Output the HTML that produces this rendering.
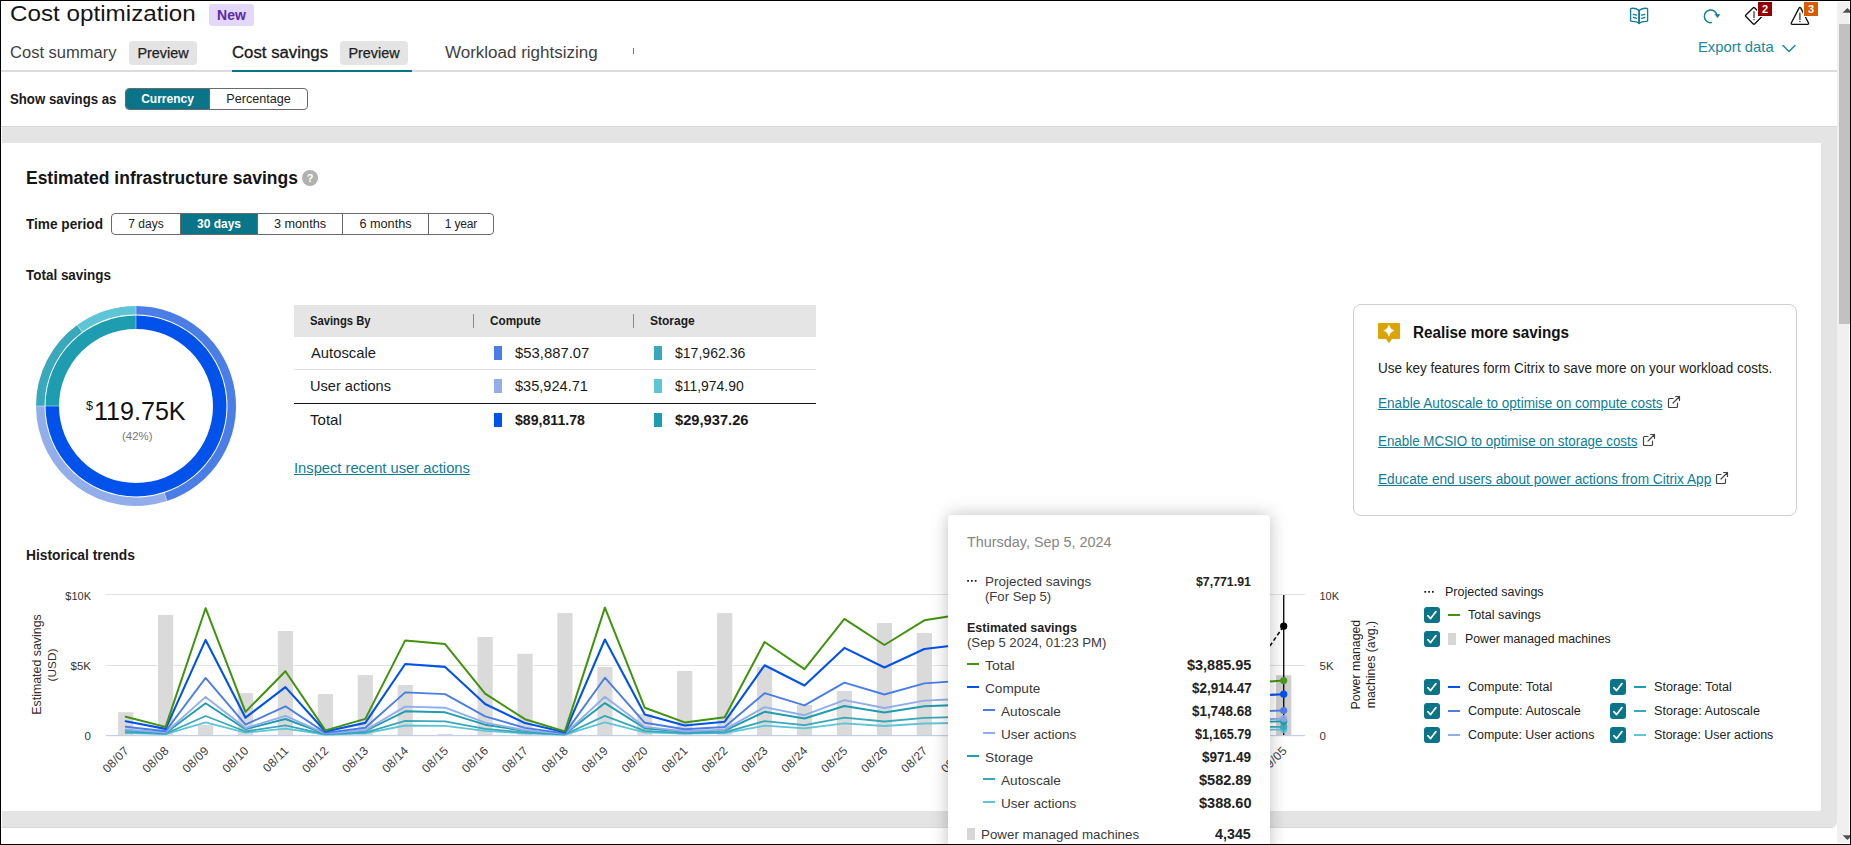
<!DOCTYPE html>
<html><head><meta charset="utf-8"><title>Cost optimization</title>
<style>
*{box-sizing:border-box;margin:0;padding:0}
html,body{width:1851px;height:845px;overflow:hidden;background:#fff}
body{font-family:"Liberation Sans",sans-serif;color:#1a1a1a;position:relative}
.abs{position:absolute;white-space:nowrap}
.t{position:absolute;white-space:nowrap;line-height:1;transform-origin:0 50%}
.b{font-weight:bold}
a{color:#0f7d95;text-decoration:underline}
.seg{position:absolute;display:flex;border:1px solid #6a6a6a;border-radius:4px;overflow:hidden;background:#fff}
.seg div{height:100%;display:flex;align-items:center;justify-content:center;font-size:12px;color:#222;border-right:1px solid #6a6a6a;white-space:nowrap}
.seg div:last-child{border-right:none}
.seg div.on{background:#0a7589;color:#fff;font-weight:bold}
.badge{position:absolute;background:#e4e4e4;border-radius:4px;font-size:14.4px;color:#222;-webkit-text-stroke:0.25px #222;display:flex;align-items:center;justify-content:center}
.cb{position:absolute;width:16px;height:16px;border-radius:3px;background:#0a7589}
.cb svg{position:absolute;left:0;top:0}
.mk{position:absolute;height:2px;width:12px}
</style></head><body>

<!-- frame -->
<div class="abs" style="left:0;top:0;width:1851px;height:845px;border:1px solid #000;z-index:50;pointer-events:none"></div>
<!-- grey page background below toolbar -->
<div class="abs" style="left:2px;top:126px;width:1835px;height:702px;background:#e4e4e4;border-radius:0 0 6px 0"></div>
<div class="abs" style="left:1px;top:827px;width:1832px;height:1px;background:#d9d9d9"></div>
<div class="abs" style="left:1px;top:126px;width:1836px;height:1px;background:#d9d9d9"></div>
<!-- main card -->
<div class="abs" style="left:1px;top:143px;width:1820px;height:668px;background:#fff"></div>
<!-- scrollbar -->
<div class="abs" style="left:1837px;top:2px;width:12px;height:841px;background:#f0f0f0"></div>
<div class="abs" style="left:1839px;top:24px;width:11px;height:300px;background:#c1c1c1"></div>
<svg class="abs" style="left:1837px;top:2px" width="13" height="20" viewBox="1837 2 13 20"><path d="M1842.6 12.7 L1852.2 12.7 L1847.4 7.9 Z" fill="#505050"/></svg>
<svg class="abs" style="left:1837px;top:826px" width="13" height="18" viewBox="1837 826 13 18"><path d="M1842.6 835.2 L1852.2 835.2 L1847.4 840 Z" fill="#505050"/></svg>

<!-- title -->
<div class="t" id="title" style="left:9.69px;top:2.80px;font-size:22px;color:#151515;transform:scaleX(1.1010);">Cost optimization</div>
<div class="abs b" id="new" style="left:209px;top:4px;width:45px;height:22px;background:#e3d7fb;border-radius:3px;color:#5a2aa5;font-size:14px;display:flex;align-items:center;justify-content:center">New</div>

<!-- tabs -->
<div class="t" id="tab1" style="left:9.97px;top:45.00px;font-size:16px;color:#3f3f3f;transform:scaleX(1.0330);">Cost summary</div>
<div class="badge" id="pv1" style="left:129px;top:41px;width:68px;height:24px">Preview</div>
<div class="t" id="tab2" style="left:232.16px;top:45.00px;font-size:16px;color:#1a1a1a;transform:scaleX(1.0483);-webkit-text-stroke:0.3px #1a1a1a;">Cost savings</div>
<div class="badge" id="pv2" style="left:340px;top:41px;width:68px;height:24px">Preview</div>
<div class="t" id="tab3" style="left:444.72px;top:45.00px;font-size:16px;color:#3f3f3f;transform:scaleX(1.0621);">Workload rightsizing</div>
<div class="abs" style="left:633px;top:48px;width:1px;height:6px;background:#777"></div>
<div class="abs" style="left:1px;top:70px;width:1836px;height:2px;background:#dcdcdc"></div>
<div class="abs" style="left:232px;top:70px;width:180px;height:2px;background:#0a7589"></div>

<!-- top right icons -->
<svg class="abs" style="left:1620px;top:0px" width="210" height="32" viewBox="1620 0 210 32" fill="none" stroke-linecap="round" stroke-linejoin="round">
<g stroke="#0f7d95" stroke-width="1.35">
<path d="M1639.1 10.5 C1637 8.7 1634 8.1 1631.3 8.3 Q1630.6 8.4 1630.6 9.1 L1630.6 20.6 Q1630.6 21.4 1631.4 21.4 C1634 21.2 1637 21.7 1639.1 23.3 C1641.2 21.7 1644.2 21.2 1646.8 21.4 Q1647.6 21.4 1647.6 20.6 L1647.6 9.1 Q1647.6 8.4 1646.9 8.3 C1644.2 8.1 1641.2 8.7 1639.1 10.5 Z"/>
<path d="M1639.1 10.6 L1639.1 23.2" stroke-width="1.9"/>
<path d="M1633.3 14.3 L1636.6 15.2 M1633.3 17.4 L1636.6 18.4 M1644.9 14.3 L1641.6 15.2 M1644.9 17.4 L1641.6 18.4" stroke-width="1.25"/>
</g>
<path d="M1711.3 22.6 A6.35 6.35 0 1 1 1716.9 15.0" stroke="#0f7d95" stroke-width="1.5"/>
<path d="M1714.9 14.3 L1720.1 14.3 L1717.5 17.8 Z" fill="#0f7d95" stroke="#0f7d95" stroke-width="0.3"/>
<g stroke="#111" stroke-width="1.35">
<path d="M1753.0 8.0 L1745.9 15.0 Q1745.1 15.8 1745.9 16.6 L1753.0 23.8 Q1753.9 24.7 1754.8 23.8 L1762.0 16.6 Q1762.8 15.8 1762.0 15.0 L1754.8 8.0 Q1753.9 7.1 1753.0 8.0 Z"/>
<path d="M1799.0 8.1 L1791.4 22.8 Q1790.7 24.4 1792.4 24.4 L1807.4 24.4 Q1809.1 24.4 1808.4 22.8 L1800.8 8.1 Q1799.9 6.7 1799.0 8.1 Z"/>
</g>
<g stroke="#555" stroke-width="1.5" stroke-linecap="butt">
<path d="M1754 11.2 L1754 17.9 M1754 19.0 L1754 20.3"/>
<path d="M1799.9 12.7 L1799.9 20.2 M1799.9 20.9 L1799.9 22.1"/>
</g>
</svg>
<div class="abs b" style="left:1757px;top:1px;width:16px;height:16px;background:#fff"></div>
<div class="abs b" style="left:1758px;top:2px;width:14px;height:14px;background:#960000;color:#fff;font-size:11px;text-align:center;line-height:14px">2</div>
<div class="abs b" style="left:1803px;top:1px;width:16px;height:16px;background:#fff"></div>
<div class="abs b" style="left:1804px;top:2px;width:14px;height:14px;background:#d95b00;color:#fff;font-size:11px;text-align:center;line-height:14px">3</div>
<div class="t" id="export" style="left:1698.22px;top:39.20px;font-size:15px;color:#1b87a0;transform:scaleX(0.9864);">Export data</div>
<svg class="abs" style="left:1781px;top:43px" width="16" height="10" viewBox="0 0 16 10" fill="none" stroke="#1b87a0" stroke-width="1.5" stroke-linecap="round" stroke-linejoin="round"><path d="M2 2.5 L8 8.5 L14 2.5"/></svg>

<!-- show savings as -->
<div class="t" id="ssa" style="left:10.40px;top:92.00px;font-size:14px;font-weight:bold;color:#1a1a1a;transform:scaleX(0.9431);">Show savings as</div>
<div class="seg" id="seg1" style="left:125px;top:88px;width:183px;height:22px"><div class="on" style="width:84px">Currency</div><div style="flex:1;font-size:12.6px">Percentage</div></div>

<!-- card heading -->
<div class="t" id="eis" style="left:25.76px;top:169.00px;font-size:18px;font-weight:bold;color:#151515;transform:scaleX(0.9706);">Estimated infrastructure savings</div>
<div class="abs b" style="left:302px;top:170px;width:16px;height:16px;border-radius:8px;background:#b1b1b1;color:#fff;font-size:11px;text-align:center;line-height:16px">?</div>
<div class="t" id="tp" style="left:25.86px;top:217.00px;font-size:14px;font-weight:bold;color:#1a1a1a;transform:scaleX(0.9737);">Time period</div>
<div class="seg" id="seg2" style="left:111px;top:213px;width:383px;height:22px"><div style="width:69px">7 days</div><div class="on" style="width:77px">30 days</div><div style="width:85px;font-size:12.7px">3 months</div><div style="width:86px;font-size:12.7px">6 months</div><div style="flex:1;font-size:12px;letter-spacing:-0.15px">1 year</div></div>
<div class="t" id="ts" style="left:25.87px;top:268.00px;font-size:14px;font-weight:bold;color:#1a1a1a;transform:scaleX(0.9611);">Total savings</div>
<svg class="abs" style="left:0;top:290px" width="280" height="230" viewBox="0 290 280 230"><path d="M136.00 306.00 A100 100 0 0 1 166.90 501.11 L164.28 493.02 A91.5 91.5 0 0 0 136.00 314.50 Z" fill="#4a7de6"/><path d="M166.90 501.11 A100 100 0 0 1 36.00 406.00 L44.50 406.00 A91.5 91.5 0 0 0 164.28 493.02 Z" fill="#92aeea"/><path d="M36.00 406.00 A100 100 0 0 1 77.22 325.10 L82.22 331.97 A91.5 91.5 0 0 0 44.50 406.00 Z" fill="#38a8ba"/><path d="M77.22 325.10 A100 100 0 0 1 136.00 306.00 L136.00 314.50 A91.5 91.5 0 0 0 82.22 331.97 Z" fill="#5ec5d6"/><path d="M136.00 315.50 A90.5 90.5 0 1 1 45.50 406.00 L59.00 406.00 A77 77 0 1 0 136.00 329.00 Z" fill="#0052eb"/><path d="M45.50 406.00 A90.5 90.5 0 0 1 136.00 315.50 L136.00 329.00 A77 77 0 0 0 59.00 406.00 Z" fill="#1e9db1"/><line x1="136.00" y1="330.00" x2="136.00" y2="305.00" stroke="#fff" stroke-opacity="0.55" stroke-width="0.8"/><line x1="164.12" y1="492.55" x2="167.21" y2="502.06" stroke="#fff" stroke-opacity="0.55" stroke-width="0.8"/><line x1="60.00" y1="406.00" x2="35.00" y2="406.00" stroke="#fff" stroke-opacity="0.55" stroke-width="0.8"/><line x1="82.51" y1="332.38" x2="76.63" y2="324.29" stroke="#fff" stroke-opacity="0.55" stroke-width="0.8"/></svg>
<div class="t" id="dsym" style="left:85.57px;top:399.15px;font-size:13.5px;color:#111;transform:scaleX(0.9364);">$</div>
<div class="t" id="dval" style="left:94.32px;top:397.75px;font-size:26.5px;color:#111;transform:scaleX(0.9463);">119.75K</div>
<div class="t" id="dpct" style="left:121.51px;top:430.70px;font-size:11px;color:#777;transform:scaleX(1.0395);">(42%)</div>

<!-- table -->
<div class="abs" style="left:294px;top:305px;width:522px;height:32px;background:#e5e5e5"></div>
<div class="abs" style="left:473px;top:314px;width:1px;height:14px;background:#8a8a8a"></div>
<div class="abs" style="left:633px;top:314px;width:1px;height:14px;background:#8a8a8a"></div>
<div class="t" id="h1" style="left:310.26px;top:314.95px;font-size:12.5px;font-weight:bold;color:#1a1a1a;transform:scaleX(0.8993);">Savings By</div>
<div class="t" id="h2" style="left:489.83px;top:314.95px;font-size:12.5px;font-weight:bold;color:#1a1a1a;transform:scaleX(0.9382);">Compute</div>
<div class="t" id="h3" style="left:649.94px;top:314.95px;font-size:12.5px;font-weight:bold;color:#1a1a1a;transform:scaleX(0.9587);">Storage</div>
<div class="abs" style="left:294px;top:369px;width:522px;height:1px;background:#e2e2e2"></div>
<div class="abs" style="left:294px;top:403px;width:522px;height:1px;background:#111"></div>
<div class="t" id="r1" style="left:310.60px;top:344.80px;font-size:15px;color:#1a1a1a;transform:scaleX(0.9866);">Autoscale</div>
<div class="t" id="r2" style="left:309.81px;top:377.80px;font-size:15px;color:#1a1a1a;transform:scaleX(0.9713);">User actions</div>
<div class="t" id="r3" style="left:309.90px;top:412.00px;font-size:15px;color:#1a1a1a;transform:scaleX(1.0041);">Total</div>
<div class="abs" style="left:494px;top:346px;width:8px;height:14px;background:#4a7de6"></div>
<div class="abs" style="left:494px;top:379px;width:8px;height:14px;background:#92aeea"></div>
<div class="abs" style="left:494px;top:413px;width:8px;height:14px;background:#0052eb"></div>
<div class="abs" style="left:654px;top:346px;width:8px;height:14px;background:#38a8ba"></div>
<div class="abs" style="left:654px;top:379px;width:8px;height:14px;background:#5ec5d6"></div>
<div class="abs" style="left:654px;top:413px;width:8px;height:14px;background:#1e9db1"></div>
<div class="t" id="v11" style="left:514.85px;top:344.80px;font-size:15px;color:#1a1a1a;transform:scaleX(0.9896);">$53,887.07</div>
<div class="t" id="v12" style="left:674.86px;top:344.80px;font-size:15px;color:#1a1a1a;transform:scaleX(0.9364);">$17,962.36</div>
<div class="t" id="v21" style="left:514.85px;top:377.80px;font-size:15px;color:#1a1a1a;transform:scaleX(0.9710);">$35,924.71</div>
<div class="t" id="v22" style="left:674.86px;top:377.80px;font-size:15px;color:#1a1a1a;transform:scaleX(0.9294);">$11,974.90</div>
<div class="t" id="v31" style="left:514.79px;top:412.00px;font-size:15px;font-weight:bold;color:#1a1a1a;transform:scaleX(0.9419);">$89,811.78</div>
<div class="t" id="v32" style="left:674.78px;top:412.00px;font-size:15px;font-weight:bold;color:#1a1a1a;transform:scaleX(0.9795);">$29,937.26</div>
<div class="t" id="inspect" style="left:293.98px;top:460.00px;font-size:15px;color:#0a7589;transform:scaleX(0.9810);"><a>Inspect recent user actions</a></div>

<!-- realise more savings panel -->
<div class="abs" style="left:1353px;top:304px;width:444px;height:212px;border:1px solid #cfcfcf;border-radius:8px;background:#fff"></div>
<svg class="abs" style="left:1377px;top:322px" width="24" height="24" viewBox="0 0 24 24"><path d="M1.5 1.5 H22.5 V16.4 H14.8 L12 20.6 L9.2 16.4 H1.5 Z" fill="#dba400" stroke="#dba400" stroke-width="1" stroke-linejoin="round"/><path d="M11.9 3.0 C12.6 6.0 14.2 7.7 17.0 8.6 C14.2 9.5 12.6 11.2 11.9 14.2 C11.2 11.2 9.6 9.5 6.8 8.6 C9.6 7.7 11.2 6.0 11.9 3.0 Z" fill="#fff" stroke="#fff" stroke-width="0.7" stroke-linejoin="round"/></svg>
<div class="t" id="rms" style="left:1412.91px;top:325.00px;font-size:16px;font-weight:bold;color:#111;transform:scaleX(0.9536);">Realise more savings</div>
<div class="t" id="rtxt" style="left:1378.19px;top:361.00px;font-size:14px;color:#222;transform:scaleX(0.9652);">Use key features form Citrix to save more on your workload costs.</div>
<div class="t" id="l1" style="left:1377.91px;top:396.00px;font-size:14px;color:#1a1a1a;transform:scaleX(0.9696);"><a>Enable Autoscale to optimise on compute costs</a></div>
<div class="t" id="l2" style="left:1377.93px;top:434.00px;font-size:14px;color:#1a1a1a;transform:scaleX(0.9552);"><a>Enable MCSIO to optimise on storage costs</a></div>
<div class="t" id="l3" style="left:1377.91px;top:472.00px;font-size:14px;color:#1a1a1a;transform:scaleX(0.9755);"><a>Educate end users about power actions from Citrix App</a></div>
<svg class="abs" style="left:1667.3px;top:394.6px" width="14" height="14" viewBox="0 0 14 14" fill="none" stroke="#444" stroke-width="1.2" stroke-linecap="round" stroke-linejoin="round"><path d="M10.5 8 V11.6 Q10.5 12.5 9.6 12.5 H2.4 Q1.5 12.5 1.5 11.6 V4.4 Q1.5 3.5 2.4 3.5 H6"/><path d="M6 8 L12.5 1.5 M8.6 1.5 H12.5 V5.4"/></svg><svg class="abs" style="left:1642.4px;top:432.6px" width="14" height="14" viewBox="0 0 14 14" fill="none" stroke="#444" stroke-width="1.2" stroke-linecap="round" stroke-linejoin="round"><path d="M10.5 8 V11.6 Q10.5 12.5 9.6 12.5 H2.4 Q1.5 12.5 1.5 11.6 V4.4 Q1.5 3.5 2.4 3.5 H6"/><path d="M6 8 L12.5 1.5 M8.6 1.5 H12.5 V5.4"/></svg><svg class="abs" style="left:1715.4px;top:470.6px" width="14" height="14" viewBox="0 0 14 14" fill="none" stroke="#444" stroke-width="1.2" stroke-linecap="round" stroke-linejoin="round"><path d="M10.5 8 V11.6 Q10.5 12.5 9.6 12.5 H2.4 Q1.5 12.5 1.5 11.6 V4.4 Q1.5 3.5 2.4 3.5 H6"/><path d="M6 8 L12.5 1.5 M8.6 1.5 H12.5 V5.4"/></svg><div class="t" id="ht" style="left:26.00px;top:548.00px;font-size:14px;font-weight:bold;color:#1a1a1a;transform:scaleX(0.9854);">Historical trends</div><svg class="abs" style="left:0;top:575px" width="1420" height="236" viewBox="0 575 1420 236" font-family="Liberation Sans, sans-serif"><rect x="106" y="594" width="1199" height="1" fill="#e2e2e2"/><rect x="106" y="665" width="1199" height="1" fill="#e2e2e2"/><rect x="118.1" y="712.2" width="15.2" height="22.8" fill="#dadada" stroke="#fff" stroke-width="1.2" paint-order="stroke"/><rect x="158.0" y="614.9" width="15.2" height="120.1" fill="#dadada" stroke="#fff" stroke-width="1.2" paint-order="stroke"/><rect x="198.0" y="725.1" width="15.2" height="9.9" fill="#dadada" stroke="#fff" stroke-width="1.2" paint-order="stroke"/><rect x="237.9" y="693.1" width="15.2" height="41.9" fill="#dadada" stroke="#fff" stroke-width="1.2" paint-order="stroke"/><rect x="277.8" y="631.0" width="15.2" height="104.0" fill="#dadada" stroke="#fff" stroke-width="1.2" paint-order="stroke"/><rect x="317.8" y="694.1" width="15.2" height="40.9" fill="#dadada" stroke="#fff" stroke-width="1.2" paint-order="stroke"/><rect x="357.7" y="675.1" width="15.2" height="59.9" fill="#dadada" stroke="#fff" stroke-width="1.2" paint-order="stroke"/><rect x="397.6" y="685.0" width="15.2" height="50.0" fill="#dadada" stroke="#fff" stroke-width="1.2" paint-order="stroke"/><rect x="437.5" y="734.0" width="15.2" height="1.0" fill="#dadada" stroke="#fff" stroke-width="1.2" paint-order="stroke"/><rect x="477.5" y="637.0" width="15.2" height="98.0" fill="#dadada" stroke="#fff" stroke-width="1.2" paint-order="stroke"/><rect x="517.4" y="653.8" width="15.2" height="81.2" fill="#dadada" stroke="#fff" stroke-width="1.2" paint-order="stroke"/><rect x="557.3" y="613.1" width="15.2" height="121.9" fill="#dadada" stroke="#fff" stroke-width="1.2" paint-order="stroke"/><rect x="597.3" y="667.0" width="15.2" height="68.0" fill="#dadada" stroke="#fff" stroke-width="1.2" paint-order="stroke"/><rect x="637.2" y="714.0" width="15.2" height="21.0" fill="#dadada" stroke="#fff" stroke-width="1.2" paint-order="stroke"/><rect x="677.1" y="671.0" width="15.2" height="64.0" fill="#dadada" stroke="#fff" stroke-width="1.2" paint-order="stroke"/><rect x="717.1" y="613.1" width="15.2" height="121.9" fill="#dadada" stroke="#fff" stroke-width="1.2" paint-order="stroke"/><rect x="757.0" y="667.0" width="15.2" height="68.0" fill="#dadada" stroke="#fff" stroke-width="1.2" paint-order="stroke"/><rect x="796.9" y="705.0" width="15.2" height="30.0" fill="#dadada" stroke="#fff" stroke-width="1.2" paint-order="stroke"/><rect x="836.8" y="691.0" width="15.2" height="44.0" fill="#dadada" stroke="#fff" stroke-width="1.2" paint-order="stroke"/><rect x="876.8" y="623.0" width="15.2" height="112.0" fill="#dadada" stroke="#fff" stroke-width="1.2" paint-order="stroke"/><rect x="916.7" y="632.9" width="15.2" height="102.1" fill="#dadada" stroke="#fff" stroke-width="1.2" paint-order="stroke"/><rect x="956.6" y="651.0" width="15.2" height="84.0" fill="#dadada" stroke="#fff" stroke-width="1.2" paint-order="stroke"/><rect x="996.6" y="665.0" width="15.2" height="70.0" fill="#dadada" stroke="#fff" stroke-width="1.2" paint-order="stroke"/><rect x="1036.5" y="637.0" width="15.2" height="98.0" fill="#dadada" stroke="#fff" stroke-width="1.2" paint-order="stroke"/><rect x="1076.4" y="693.0" width="15.2" height="42.0" fill="#dadada" stroke="#fff" stroke-width="1.2" paint-order="stroke"/><rect x="1116.4" y="644.0" width="15.2" height="91.0" fill="#dadada" stroke="#fff" stroke-width="1.2" paint-order="stroke"/><rect x="1156.3" y="679.0" width="15.2" height="56.0" fill="#dadada" stroke="#fff" stroke-width="1.2" paint-order="stroke"/><rect x="1196.2" y="658.0" width="15.2" height="77.0" fill="#dadada" stroke="#fff" stroke-width="1.2" paint-order="stroke"/><rect x="1236.1" y="676.2" width="15.2" height="58.8" fill="#dadada" stroke="#fff" stroke-width="1.2" paint-order="stroke"/><rect x="1276.1" y="675.2" width="15.2" height="59.8" fill="#cecece" stroke="#fff" stroke-width="1.2" paint-order="stroke"/><rect x="106" y="735" width="1199" height="1.2" fill="#c3cfea"/><polyline points="125.7,733.2 165.6,734.2 205.6,722.3 245.5,732.7 285.4,728.6 325.4,734.5 365.3,733.4 405.2,725.5 445.1,725.9 485.1,730.9 525.0,733.4 564.9,734.6 604.9,722.3 644.8,732.3 684.7,733.7 724.7,733.2 764.6,725.7 804.5,728.4 844.4,723.4 884.4,726.0 924.3,723.5 964.2,722.9 1004.2,723.9 1044.1,723.2 1084.0,726.3 1124.0,725.1 1163.9,728.0 1203.8,726.6 1243.7,729.8 1283.7,729.6" fill="none" stroke="#5ec5d6" stroke-width="1.8" stroke-linejoin="round" stroke-linecap="round"/><polyline points="125.7,732.2 165.6,733.8 205.6,716.0 245.5,731.5 285.4,725.4 325.4,734.3 365.3,732.6 405.2,720.8 445.1,721.4 485.1,728.8 525.0,732.6 564.9,734.5 604.9,715.9 644.8,730.9 684.7,733.1 724.7,732.3 764.6,721.1 804.5,725.1 844.4,717.6 884.4,721.5 924.3,717.8 964.2,716.9 1004.2,718.4 1044.1,717.4 1084.0,722.0 1124.0,720.1 1163.9,724.5 1203.8,722.4 1243.7,727.2 1283.7,726.8" fill="none" stroke="#38a8ba" stroke-width="1.8" stroke-linejoin="round" stroke-linecap="round"/><polyline points="125.7,730.4 165.6,733.0 205.6,703.3 245.5,729.2 285.4,719.0 325.4,733.8 365.3,731.0 405.2,711.3 445.1,712.3 485.1,724.7 525.0,731.0 564.9,734.1 604.9,703.1 644.8,728.2 684.7,731.9 724.7,730.6 764.6,711.8 804.5,718.5 844.4,706.0 884.4,712.5 924.3,706.3 964.2,704.8 1004.2,707.4 1044.1,705.6 1084.0,713.3 1124.0,710.1 1163.9,717.5 1203.8,714.0 1243.7,722.0 1283.7,721.4" fill="none" stroke="#1e9db1" stroke-width="1.9" stroke-linejoin="round" stroke-linecap="round"/><polyline points="125.7,729.5 165.6,732.6 205.6,696.9 245.5,728.1 285.4,715.8 325.4,733.6 365.3,730.2 405.2,706.6 445.1,707.7 485.1,722.6 525.0,730.3 564.9,733.9 604.9,696.8 644.8,726.9 684.7,731.2 724.7,729.7 764.6,707.1 804.5,715.2 844.4,700.1 884.4,708.0 924.3,700.6 964.2,698.7 1004.2,701.8 1044.1,699.7 1084.0,709.0 1124.0,705.2 1163.9,714.0 1203.8,709.8 1243.7,719.5 1283.7,718.7" fill="none" stroke="#92aeea" stroke-width="1.9" stroke-linejoin="round" stroke-linecap="round"/><polyline points="125.7,726.7 165.6,731.3 205.6,677.9 245.5,724.6 285.4,706.3 325.4,732.9 365.3,727.8 405.2,692.4 445.1,694.1 485.1,716.4 525.0,727.9 564.9,733.4 604.9,677.7 644.8,722.8 684.7,729.3 724.7,727.0 764.6,693.2 804.5,705.3 844.4,682.7 884.4,694.5 924.3,683.4 964.2,680.6 1004.2,685.2 1044.1,682.1 1084.0,695.9 1124.0,690.3 1163.9,703.5 1203.8,697.2 1243.7,711.7 1283.7,710.5" fill="none" stroke="#4a7de6" stroke-width="1.9" stroke-linejoin="round" stroke-linecap="round"/><polyline points="125.7,721.2 165.6,728.9 205.6,639.9 245.5,717.7 285.4,687.1 325.4,731.5 365.3,722.9 405.2,664.0 445.1,666.9 485.1,704.0 525.0,723.1 564.9,732.3 604.9,639.5 644.8,714.6 684.7,725.5 724.7,721.7 764.6,665.3 804.5,685.5 844.4,647.9 884.4,667.5 924.3,649.0 964.2,644.3 1004.2,652.0 1044.1,646.8 1084.0,669.9 1124.0,660.5 1163.9,682.5 1203.8,672.0 1243.7,696.1 1283.7,694.2" fill="none" stroke="#0052eb" stroke-width="2.1" stroke-linejoin="round" stroke-linecap="round"/><polyline points="125.7,716.7 165.6,726.9 205.6,608.2 245.5,711.9 285.4,671.2 325.4,730.4 365.3,718.9 405.2,640.4 445.1,644.1 485.1,693.7 525.0,719.2 564.9,731.4 604.9,607.6 644.8,707.8 684.7,722.4 724.7,717.2 764.6,642.0 804.5,669.1 844.4,618.8 884.4,645.0 924.3,620.3 964.2,614.0 1004.2,624.4 1044.1,617.4 1084.0,648.2 1124.0,635.6 1163.9,665.0 1203.8,651.0 1243.7,683.2 1283.7,680.6" fill="none" stroke="#41920c" stroke-width="2.0" stroke-linejoin="round" stroke-linecap="round"/><line x1="1243.7" y1="683.2" x2="1283.7" y2="626.2" stroke="#111" stroke-width="1.6" stroke-dasharray="4 2.5"/><line x1="1283.7" x2="1283.7" y1="595" y2="735" stroke="#111" stroke-width="1.4"/><circle cx="1283.7" cy="626.2" r="3.6" fill="#000"/><circle cx="1283.7" cy="729.6" r="3.6" fill="#5ec5d6" fill-opacity="0.85"/><circle cx="1283.7" cy="726.8" r="3.6" fill="#38a8ba" fill-opacity="0.85"/><circle cx="1283.7" cy="721.4" r="3.6" fill="#1e9db1" fill-opacity="1"/><circle cx="1283.7" cy="718.7" r="3.6" fill="#92aeea" fill-opacity="0.85"/><circle cx="1283.7" cy="710.5" r="3.6" fill="#4a7de6" fill-opacity="1"/><circle cx="1283.7" cy="694.2" r="3.6" fill="#0052eb" fill-opacity="1"/><circle cx="1283.7" cy="680.6" r="3.6" fill="#4c9a1e" fill-opacity="1"/><text x="91" y="600.2" font-size="11" fill="#333" text-anchor="end">$10K</text><text x="91" y="670.2" font-size="11.5" fill="#333" text-anchor="end">$5K</text><text x="91" y="740.2" font-size="11.5" fill="#333" text-anchor="end">0</text><text x="1319.5" y="600.2" font-size="11" fill="#333">10K</text><text x="1319.5" y="670.2" font-size="11.5" fill="#333">5K</text><text x="1319.5" y="740.2" font-size="11.5" fill="#333">0</text><text x="129.7" y="751.3" font-size="12" letter-spacing="0.3" fill="#3c3c3c" text-anchor="end" transform="rotate(-45 129.7 751.3)">08/07</text><text x="169.6" y="751.3" font-size="12" letter-spacing="0.3" fill="#3c3c3c" text-anchor="end" transform="rotate(-45 169.6 751.3)">08/08</text><text x="209.6" y="751.3" font-size="12" letter-spacing="0.3" fill="#3c3c3c" text-anchor="end" transform="rotate(-45 209.6 751.3)">08/09</text><text x="249.5" y="751.3" font-size="12" letter-spacing="0.3" fill="#3c3c3c" text-anchor="end" transform="rotate(-45 249.5 751.3)">08/10</text><text x="289.4" y="751.3" font-size="12" letter-spacing="0.3" fill="#3c3c3c" text-anchor="end" transform="rotate(-45 289.4 751.3)">08/11</text><text x="329.4" y="751.3" font-size="12" letter-spacing="0.3" fill="#3c3c3c" text-anchor="end" transform="rotate(-45 329.4 751.3)">08/12</text><text x="369.3" y="751.3" font-size="12" letter-spacing="0.3" fill="#3c3c3c" text-anchor="end" transform="rotate(-45 369.3 751.3)">08/13</text><text x="409.2" y="751.3" font-size="12" letter-spacing="0.3" fill="#3c3c3c" text-anchor="end" transform="rotate(-45 409.2 751.3)">08/14</text><text x="449.1" y="751.3" font-size="12" letter-spacing="0.3" fill="#3c3c3c" text-anchor="end" transform="rotate(-45 449.1 751.3)">08/15</text><text x="489.1" y="751.3" font-size="12" letter-spacing="0.3" fill="#3c3c3c" text-anchor="end" transform="rotate(-45 489.1 751.3)">08/16</text><text x="529.0" y="751.3" font-size="12" letter-spacing="0.3" fill="#3c3c3c" text-anchor="end" transform="rotate(-45 529.0 751.3)">08/17</text><text x="568.9" y="751.3" font-size="12" letter-spacing="0.3" fill="#3c3c3c" text-anchor="end" transform="rotate(-45 568.9 751.3)">08/18</text><text x="608.9" y="751.3" font-size="12" letter-spacing="0.3" fill="#3c3c3c" text-anchor="end" transform="rotate(-45 608.9 751.3)">08/19</text><text x="648.8" y="751.3" font-size="12" letter-spacing="0.3" fill="#3c3c3c" text-anchor="end" transform="rotate(-45 648.8 751.3)">08/20</text><text x="688.7" y="751.3" font-size="12" letter-spacing="0.3" fill="#3c3c3c" text-anchor="end" transform="rotate(-45 688.7 751.3)">08/21</text><text x="728.7" y="751.3" font-size="12" letter-spacing="0.3" fill="#3c3c3c" text-anchor="end" transform="rotate(-45 728.7 751.3)">08/22</text><text x="768.6" y="751.3" font-size="12" letter-spacing="0.3" fill="#3c3c3c" text-anchor="end" transform="rotate(-45 768.6 751.3)">08/23</text><text x="808.5" y="751.3" font-size="12" letter-spacing="0.3" fill="#3c3c3c" text-anchor="end" transform="rotate(-45 808.5 751.3)">08/24</text><text x="848.4" y="751.3" font-size="12" letter-spacing="0.3" fill="#3c3c3c" text-anchor="end" transform="rotate(-45 848.4 751.3)">08/25</text><text x="888.4" y="751.3" font-size="12" letter-spacing="0.3" fill="#3c3c3c" text-anchor="end" transform="rotate(-45 888.4 751.3)">08/26</text><text x="928.3" y="751.3" font-size="12" letter-spacing="0.3" fill="#3c3c3c" text-anchor="end" transform="rotate(-45 928.3 751.3)">08/27</text><text x="968.2" y="751.3" font-size="12" letter-spacing="0.3" fill="#3c3c3c" text-anchor="end" transform="rotate(-45 968.2 751.3)">08/28</text><text x="1008.2" y="751.3" font-size="12" letter-spacing="0.3" fill="#3c3c3c" text-anchor="end" transform="rotate(-45 1008.2 751.3)">08/29</text><text x="1048.1" y="751.3" font-size="12" letter-spacing="0.3" fill="#3c3c3c" text-anchor="end" transform="rotate(-45 1048.1 751.3)">08/30</text><text x="1088.0" y="751.3" font-size="12" letter-spacing="0.3" fill="#3c3c3c" text-anchor="end" transform="rotate(-45 1088.0 751.3)">08/31</text><text x="1128.0" y="751.3" font-size="12" letter-spacing="0.3" fill="#3c3c3c" text-anchor="end" transform="rotate(-45 1128.0 751.3)">09/01</text><text x="1167.9" y="751.3" font-size="12" letter-spacing="0.3" fill="#3c3c3c" text-anchor="end" transform="rotate(-45 1167.9 751.3)">09/02</text><text x="1207.8" y="751.3" font-size="12" letter-spacing="0.3" fill="#3c3c3c" text-anchor="end" transform="rotate(-45 1207.8 751.3)">09/03</text><text x="1247.7" y="751.3" font-size="12" letter-spacing="0.3" fill="#3c3c3c" text-anchor="end" transform="rotate(-45 1247.7 751.3)">09/04</text><text x="1287.7" y="751.3" font-size="12" letter-spacing="0.3" fill="#3c3c3c" text-anchor="end" transform="rotate(-45 1287.7 751.3)">09/05</text><text font-size="12.4" fill="#3a2a2a" text-anchor="middle" transform="translate(41 664.5) rotate(-90)">Estimated savings</text><text font-size="11.8" fill="#3a2a2a" text-anchor="middle" transform="translate(56.2 665) rotate(-90)">(USD)</text><text font-size="12.3" fill="#222" text-anchor="middle" transform="translate(1360 664.6) rotate(-90)">Power managed</text><text font-size="12.3" fill="#222" text-anchor="middle" transform="translate(1374.9 664.6) rotate(-90)">machines (avg.)</text></svg><svg class="abs" style="left:1424px;top:590px" width="12" height="4"><rect x="0.4" y="1" width="1.7" height="1.7" fill="#111"/><rect x="4.2" y="1" width="1.7" height="1.7" fill="#111"/><rect x="8" y="1" width="1.7" height="1.7" fill="#111"/></svg><div class="t" id="lg0" style="left:1445.00px;top:585.95px;font-size:12.5px;color:#222;transform:scaleX(0.9995);">Projected savings</div><div class="cb" style="left:1424px;top:607px"><svg width="16" height="16" viewBox="0 0 16 16" fill="none" stroke="#fff" stroke-width="1.7" stroke-linecap="round" stroke-linejoin="round"><path d="M3.8 8.6 L6.6 11.6 L12 4.6"/></svg></div><div class="mk" style="left:1448px;top:614px;background:#41920c"></div><div class="t" id="lg1" style="left:1468.25px;top:608.85px;font-size:12.5px;color:#222;transform:scaleX(1.0075);">Total savings</div><div class="cb" style="left:1424px;top:631px"><svg width="16" height="16" viewBox="0 0 16 16" fill="none" stroke="#fff" stroke-width="1.7" stroke-linecap="round" stroke-linejoin="round"><path d="M3.8 8.6 L6.6 11.6 L12 4.6"/></svg></div><div class="abs" style="left:1448px;top:633px;width:8px;height:12px;background:#d6d6d6"></div><div class="t" id="lg2" style="left:1465.02px;top:632.85px;font-size:12.5px;color:#222;transform:scaleX(0.9839);">Power managed machines</div><div class="cb" style="left:1424px;top:679px"><svg width="16" height="16" viewBox="0 0 16 16" fill="none" stroke="#fff" stroke-width="1.7" stroke-linecap="round" stroke-linejoin="round"><path d="M3.8 8.6 L6.6 11.6 L12 4.6"/></svg></div><div class="mk" style="left:1448px;top:686px;background:#0052eb"></div><div class="t" id="lg3" style="left:1468.37px;top:680.85px;font-size:12.5px;color:#222;transform:scaleX(1.0052);">Compute: Total</div><div class="cb" style="left:1424px;top:703px"><svg width="16" height="16" viewBox="0 0 16 16" fill="none" stroke="#fff" stroke-width="1.7" stroke-linecap="round" stroke-linejoin="round"><path d="M3.8 8.6 L6.6 11.6 L12 4.6"/></svg></div><div class="mk" style="left:1448px;top:710px;background:#4a7de6"></div><div class="t" id="lg4" style="left:1468.07px;top:704.85px;font-size:12.5px;color:#222;transform:scaleX(1.0073);">Compute: Autoscale</div><div class="cb" style="left:1424px;top:727px"><svg width="16" height="16" viewBox="0 0 16 16" fill="none" stroke="#fff" stroke-width="1.7" stroke-linecap="round" stroke-linejoin="round"><path d="M3.8 8.6 L6.6 11.6 L12 4.6"/></svg></div><div class="mk" style="left:1448px;top:734px;background:#92aeea"></div><div class="t" id="lg5" style="left:1468.08px;top:728.85px;font-size:12.5px;color:#222;transform:scaleX(0.9940);">Compute: User actions</div><div class="cb" style="left:1610px;top:679px"><svg width="16" height="16" viewBox="0 0 16 16" fill="none" stroke="#fff" stroke-width="1.7" stroke-linecap="round" stroke-linejoin="round"><path d="M3.8 8.6 L6.6 11.6 L12 4.6"/></svg></div><div class="mk" style="left:1634px;top:686px;background:#1e9db1"></div><div class="t" id="lg6" style="left:1653.93px;top:680.85px;font-size:12.5px;color:#222;transform:scaleX(1.0119);">Storage: Total</div><div class="cb" style="left:1610px;top:703px"><svg width="16" height="16" viewBox="0 0 16 16" fill="none" stroke="#fff" stroke-width="1.7" stroke-linecap="round" stroke-linejoin="round"><path d="M3.8 8.6 L6.6 11.6 L12 4.6"/></svg></div><div class="mk" style="left:1634px;top:710px;background:#38a8ba"></div><div class="t" id="lg7" style="left:1653.93px;top:704.85px;font-size:12.5px;color:#222;transform:scaleX(1.0095);">Storage: Autoscale</div><div class="cb" style="left:1610px;top:727px"><svg width="16" height="16" viewBox="0 0 16 16" fill="none" stroke="#fff" stroke-width="1.7" stroke-linecap="round" stroke-linejoin="round"><path d="M3.8 8.6 L6.6 11.6 L12 4.6"/></svg></div><div class="mk" style="left:1634px;top:734px;background:#5ec5d6"></div><div class="t" id="lg8" style="left:1653.94px;top:728.85px;font-size:12.5px;color:#222;transform:scaleX(0.9926);">Storage: User actions</div><div class="abs" style="left:948px;top:515px;width:322px;height:340px;background:#fff;border-radius:4px;box-shadow:0 0 17px rgba(0,0,0,0.25)"></div><div class="t" id="tt0" style="left:967.41px;top:534.00px;font-size:15px;color:#858585;transform:scaleX(0.9598);">Thursday, Sep 5, 2024</div><svg class="abs" style="left:967px;top:579px" width="12" height="4"><rect x="0.2" y="1" width="1.7" height="1.7" fill="#111"/><rect x="4" y="1" width="1.7" height="1.7" fill="#111"/><rect x="7.8" y="1" width="1.7" height="1.7" fill="#111"/></svg><div class="t" id="tt1" style="left:984.52px;top:574.65px;font-size:13.5px;color:#3a3a3a;transform:scaleX(0.9978);">Projected savings</div><div class="t" id="tt2" style="left:984.81px;top:589.75px;font-size:13.5px;color:#3a3a3a;transform:scaleX(0.9696);">(For Sep 5)</div><div class="t" id="tv0" style="left:1196.31px;top:574.65px;font-size:13.5px;font-weight:bold;color:#222;transform:scaleX(0.9137);">$7,771.91</div><div class="t" id="tt3" style="left:966.89px;top:620.75px;font-size:13.5px;font-weight:bold;color:#222;transform:scaleX(0.9265);">Estimated savings</div><div class="t" id="tt4" style="left:966.91px;top:635.65px;font-size:13.5px;color:#3a3a3a;transform:scaleX(0.9726);">(Sep 5 2024, 01:23 PM)</div><div class="mk" style="left:967px;top:663px;background:#41920c"></div><div class="t" id="tr0" style="left:984.72px;top:658.65px;font-size:13.5px;color:#3a3a3a;transform:scaleX(1.0425);">Total</div><div class="t" id="tv1" style="left:1186.88px;top:658.00px;font-size:14px;font-weight:bold;color:#222;transform:scaleX(1.0334);">$3,885.95</div><div class="mk" style="left:967px;top:686px;background:#0052eb"></div><div class="t" id="tr1" style="left:984.92px;top:681.65px;font-size:13.5px;color:#3a3a3a;transform:scaleX(1.0101);">Compute</div><div class="t" id="tv2" style="left:1191.70px;top:681.00px;font-size:14px;font-weight:bold;color:#222;transform:scaleX(0.9589);">$2,914.47</div><div class="mk" style="left:983px;top:709px;background:#4a7de6"></div><div class="t" id="tr2" style="left:1001.30px;top:704.65px;font-size:13.5px;color:#3a3a3a;transform:scaleX(1.0110);">Autoscale</div><div class="t" id="tv3" style="left:1191.70px;top:704.00px;font-size:14px;font-weight:bold;color:#222;transform:scaleX(0.9567);">$1,748.68</div><div class="mk" style="left:983px;top:732px;background:#92aeea"></div><div class="t" id="tr3" style="left:1000.88px;top:727.65px;font-size:13.5px;color:#3a3a3a;transform:scaleX(1.0044);">User actions</div><div class="t" id="tv4" style="left:1194.91px;top:727.00px;font-size:14px;font-weight:bold;color:#222;transform:scaleX(0.9058);">$1,165.79</div><div class="mk" style="left:967px;top:755px;background:#1e9db1"></div><div class="t" id="tr4" style="left:984.98px;top:750.65px;font-size:13.5px;color:#3a3a3a;transform:scaleX(1.0210);">Storage</div><div class="t" id="tv5" style="left:1202.40px;top:750.00px;font-size:14px;font-weight:bold;color:#222;transform:scaleX(0.9677);">$971.49</div><div class="mk" style="left:983px;top:778px;background:#38a8ba"></div><div class="t" id="tr5" style="left:1001.30px;top:773.65px;font-size:13.5px;color:#3a3a3a;transform:scaleX(1.0110);">Autoscale</div><div class="t" id="tv6" style="left:1198.98px;top:773.00px;font-size:14px;font-weight:bold;color:#222;transform:scaleX(1.0359);">$582.89</div><div class="mk" style="left:983px;top:801px;background:#5ec5d6"></div><div class="t" id="tr6" style="left:1000.88px;top:796.65px;font-size:13.5px;color:#3a3a3a;transform:scaleX(1.0044);">User actions</div><div class="t" id="tv7" style="left:1198.98px;top:796.00px;font-size:14px;font-weight:bold;color:#222;transform:scaleX(1.0373);">$388.60</div><div class="abs" style="left:967px;top:828px;width:8px;height:12px;background:#d6d6d6"></div><div class="t" id="tr7" style="left:981.13px;top:827.65px;font-size:13.5px;color:#3a3a3a;transform:scaleX(0.9893);">Power managed machines</div><div class="t" id="tv8" style="left:1215.49px;top:827.00px;font-size:14px;font-weight:bold;color:#222;transform:scaleX(1.0221);">4,345</div>
</body></html>
